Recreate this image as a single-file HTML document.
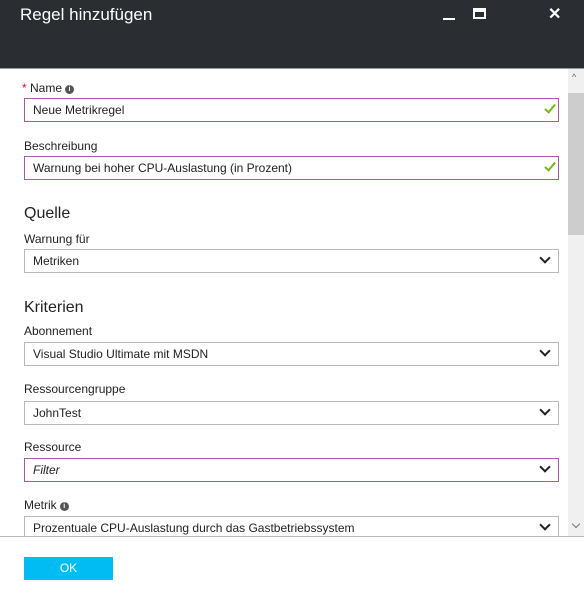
<!DOCTYPE html>
<html><head><style>
body{margin:0;width:584px;height:599px;background:#fff;font-family:"Liberation Sans",sans-serif;position:relative;overflow:hidden;color:#222}
.hdr{position:absolute;left:0;top:0;width:584px;height:68px;background:#2a2d31;border-bottom:1px solid #9a9a9a}
.title{position:absolute;left:20px;top:5px;color:#fff;font-size:17px}
.ab{position:absolute}
.lbl{position:absolute;left:24px;font-size:12px;color:#222}
.h{position:absolute;left:24px;font-size:16px;color:#222}
.in{position:absolute;left:24px;width:533px;height:22px;border:1px solid #b8b8b8;font-size:12px;line-height:22px;box-sizing:content-box}
.in span{position:absolute;left:8px}
.p{border-color:#a65ca6}
.chev{position:absolute;right:9px;top:4px;width:6px;height:6px;border-right:2px solid #222;border-bottom:2px solid #222;transform:rotate(45deg)}
.chk{position:absolute;right:5px;top:3px;width:4px;height:9px;border-right:2px solid #7ab51d;border-bottom:2px solid #7ab51d;transform:rotate(40deg)}
.info{display:inline-block;width:9px;height:9px;border-radius:50%;background:#555;color:#fff;font-size:7px;line-height:9px;text-align:center;font-weight:bold;vertical-align:1px;margin-left:3px}
</style></head><body>
<div class="hdr"><div class="title">Regel hinzufügen</div>
<div class="ab" style="left:443px;top:18px;width:12px;height:2px;background:#fff"></div>
<div class="ab" style="left:473px;top:8px;width:9px;height:5px;border:2px solid #fff;border-top-width:4px"></div>
<div class="ab" style="left:548px;top:4px;color:#fff;font-size:16px;font-weight:bold">✕</div>
</div>
<div class="ab" style="left:568px;top:69px;width:16px;height:467px;background:#f0f0f0"></div>
<div class="ab" style="left:568px;top:93px;width:16px;height:142px;background:#cdcdcd"></div>
<div class="ab" style="left:572px;top:72px;font-size:9px;color:#666">^</div>
<div class="ab" style="left:573px;top:521px;width:5px;height:5px;border-right:1px solid #777;border-bottom:1px solid #777;transform:rotate(45deg)"></div>

<div class="lbl" style="top:81px"><span style="color:#e81123;margin-left:-2px">*</span> Name<span class="info">i</span></div>
<div class="in p" style="top:98px"><span>Neue Metrikregel</span><div class="chk"></div></div>
<div class="lbl" style="top:139px">Beschreibung</div>
<div class="in p" style="top:156px"><span>Warnung bei hoher CPU-Auslastung (in Prozent)</span><div class="chk"></div></div>
<div class="h" style="top:205px">Quelle</div>
<div class="lbl" style="top:232px">Warnung für</div>
<div class="in" style="top:249px"><span>Metriken</span><div class="chev"></div></div>
<div class="h" style="top:299px">Kriterien</div>
<div class="lbl" style="top:324px">Abonnement</div>
<div class="in" style="top:342px"><span>Visual Studio Ultimate mit MSDN</span><div class="chev"></div></div>
<div class="lbl" style="top:382px">Ressourcengruppe</div>
<div class="in" style="top:401px"><span>JohnTest</span><div class="chev"></div></div>
<div class="lbl" style="top:440px">Ressource</div>
<div class="in p" style="top:458px"><span style="font-style:italic">Filter</span><div class="chev"></div></div>
<div class="lbl" style="top:498px">Metrik<span class="info">i</span></div>
<div class="in" style="top:516px"><span>Prozentuale CPU-Auslastung durch das Gastbetriebssystem</span><div class="chev"></div></div>
<div class="ab" style="left:0;top:536px;width:584px;height:63px;background:#fff;border-top:1px solid #b8b8b8"></div>
<div class="ab" style="left:24px;top:557px;width:89px;height:23px;background:#00bcf2;color:#fff;font-size:12px;text-align:center;line-height:23px">OK</div>
</body></html>
